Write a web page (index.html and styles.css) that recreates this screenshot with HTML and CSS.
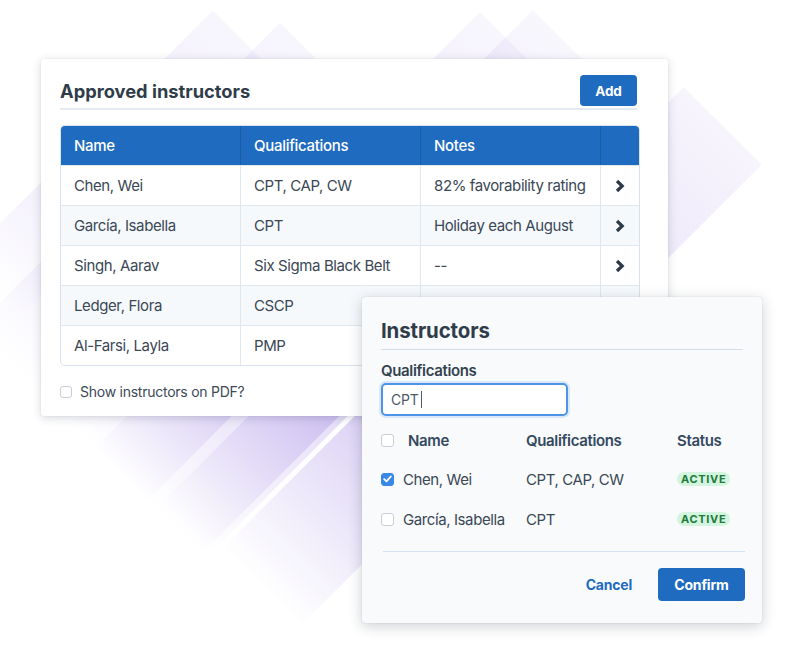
FILE: index.html
```html
<!DOCTYPE html>
<html lang="en">
<head>
<meta charset="utf-8">
<title>Approved instructors</title>
<link rel="stylesheet" href="styles.css">
</head>
<body>
<div class="page">
  <div class="bg" aria-hidden="true">
    <div class="bands">
      <div class="band b1"></div>
      <div class="band b2"></div>
      <div class="band b3"></div>
      <div class="band b4"></div>
      <div class="band b5"></div>
      <div class="band b6"></div>
    </div>
  </div>

  <section class="card">
    <header class="card-head">
      <h1 class="card-title">Approved instructors</h1>
      <button class="btn btn-primary btn-add">Add</button>
    </header>
    <div class="tbl">
      <div class="tr th">
        <div class="cell">Name</div>
        <div class="cell">Qualifications</div>
        <div class="cell">Notes</div>
        <div class="cell"></div>
      </div>
      <div class="tr">
        <div class="cell">Chen, Wei</div>
        <div class="cell">CPT, CAP, CW</div>
        <div class="cell">82% favorability rating</div>
        <div class="cell chev"><svg width="12" height="16" viewBox="0 0 12 16"><polyline points="3,3 8.2,8 3,13" fill="none" stroke="#2c3a48" stroke-width="3.2"/></svg></div>
      </div>
      <div class="tr alt">
        <div class="cell">García, Isabella</div>
        <div class="cell">CPT</div>
        <div class="cell">Holiday each August</div>
        <div class="cell chev"><svg width="12" height="16" viewBox="0 0 12 16"><polyline points="3,3 8.2,8 3,13" fill="none" stroke="#2c3a48" stroke-width="3.2"/></svg></div>
      </div>
      <div class="tr">
        <div class="cell">Singh, Aarav</div>
        <div class="cell">Six Sigma Black Belt</div>
        <div class="cell">--</div>
        <div class="cell chev"><svg width="12" height="16" viewBox="0 0 12 16"><polyline points="3,3 8.2,8 3,13" fill="none" stroke="#2c3a48" stroke-width="3.2"/></svg></div>
      </div>
      <div class="tr alt">
        <div class="cell">Ledger, Flora</div>
        <div class="cell">CSCP</div>
        <div class="cell"></div>
        <div class="cell"></div>
      </div>
      <div class="tr">
        <div class="cell">Al-Farsi, Layla</div>
        <div class="cell">PMP</div>
        <div class="cell"></div>
        <div class="cell"></div>
      </div>
    </div>
    <label class="pdf-row"><span class="cb"></span><span>Show instructors on PDF?</span></label>
  </section>

  <section class="modal">
    <h2 class="modal-title">Instructors</h2>
    <div class="field-label">Qualifications</div>
    <div class="input"><span>CPT</span><span class="caret"></span></div>
    <div class="mtbl">
      <div class="mrow mhead">
        <div class="mname"><span class="cb"></span><span class="hname">Name</span></div>
        <div>Qualifications</div>
        <div>Status</div>
      </div>
      <div class="mrow">
        <div class="mname"><span class="cb checked"><svg width="9" height="8" viewBox="0 0 9 8"><polyline points="1.2,4.2 3.5,6.3 7.8,1.5" fill="none" stroke="#fff" stroke-width="1.8" stroke-linecap="round" stroke-linejoin="round"/></svg></span><span>Chen, Wei</span></div>
        <div>CPT, CAP, CW</div>
        <div><span class="badge">ACTIVE</span></div>
      </div>
      <div class="mrow">
        <div class="mname"><span class="cb"></span><span>García, Isabella</span></div>
        <div>CPT</div>
        <div><span class="badge">ACTIVE</span></div>
      </div>
    </div>
    <footer class="modal-foot">
      <button class="btn btn-link">Cancel</button>
      <button class="btn btn-primary btn-confirm">Confirm</button>
    </footer>
  </section>
</div>
</body>
</html>
```

FILE: styles.css
```css
* { box-sizing: border-box; }
html, body { margin: 0; padding: 0; background: #fff; }
body {
  font-family: Inter, "Noto Sans", "Liberation Sans", sans-serif;
  color: #3a4755;
}
.page {
  position: relative;
  width: 800px;
  height: 649px;
  overflow: hidden;
  background: #fff;
}

/* decorative background */
.bg { position: absolute; inset: 0; overflow: hidden; z-index: 0; }
.bands { position: absolute; left: 0; top: 0; width: 0; height: 0; transform: rotate(-45deg); transform-origin: 0 0; }
.band { position: absolute; }
.b1 { left: -210px; top: 158px; width: 353px; height: 80px;
  background: linear-gradient(to right, rgba(150,120,225,0) 0%, rgba(150,120,225,.15) 40%, rgba(150,120,225,.07) 100%); }
.b2 { left: -250px; top: 214px; width: 432px; height: 100px;
  background: linear-gradient(to right, rgba(150,120,225,0) 0%, rgba(150,120,225,.17) 40%, rgba(150,120,225,.07) 100%); }
.b3 { left: -250px; top: 348px; width: 581px; height: 110px;
  background: linear-gradient(to right, rgba(150,120,225,0) 0%, rgba(150,120,225,.32) 35%, rgba(150,120,225,.06) 100%); }
.b4 { left: -250px; top: 384px; width: 620px; height: 150px;
  background: linear-gradient(to right, rgba(150,120,225,0) 0%, rgba(150,120,225,.32) 35%, rgba(150,120,225,.06) 100%); }
.b5 { left: -230px; top: 545px; width: 652px; height: 110px;
  background: linear-gradient(to right, rgba(150,120,225,0) 0%, rgba(150,120,225,.34) 30%, rgba(150,120,225,.08) 100%); }
.b6 { left: -240px; top: 470px; width: 420px; height: 70px;
  background: linear-gradient(to right, rgba(150,120,225,0) 0%, rgba(150,120,225,.25) 45%, rgba(150,120,225,.05) 100%); }

/* main card */
.card {
  position: relative;
  z-index: 1;
  width: 627px;
  height: 357px;
  margin: 59px 0 0 41px;
  background: #fff;
  border-radius: 2px;
  box-shadow: 0 2px 10px rgba(30, 40, 70, .18), 0 0 1px rgba(30,40,70,.2);
  padding: 16px 28px 0 19px;
}
.card-head {
  display: flex;
  align-items: center;
  justify-content: space-between;
  margin-right: 3px;
  padding-bottom: 2px;
  border-bottom: 2px solid #e3e9f0;
}
.card-title {
  margin: 0;
  font-size: 18.3px;
  font-weight: 700;
  color: #2f3d4a;
  line-height: 29px;
  padding-top: 2px;
}
.btn {
  font-family: Inter, "Noto Sans", "Liberation Sans", sans-serif;
  border: 0;
  background: none;
  padding: 0;
  cursor: pointer;
}
.btn-primary {
  background: #1f6bbf;
  color: #fff;
  font-weight: 700;
  border-radius: 4px;
}
.btn-add { width: 57px; height: 31px; font-size: 13.5px; letter-spacing: -0.1px; }

.tbl {
  margin-top: 15px;
  border: 1px solid #d9e3ed;
  border-radius: 5px;
  overflow: hidden;
}
.tr {
  display: grid;
  grid-template-columns: 179px 180px 180px 1fr;
  height: 40px;
  border-top: 1px solid #dfe7f0;
}
.tr.th { height: 39px; border-top: 0; background: #1f6bbf; color: #fff; font-weight: 500; }
.tr.alt { background: #f6f9fc; }
.cell {
  display: flex;
  align-items: center;
  padding: 0 13px;
  font-size: 15px;
  letter-spacing: -0.4px;
  white-space: nowrap;
  border-left: 1px solid #dfe7f0;
}
.th .cell { letter-spacing: -0.3px; }
.cell:first-child { border-left: 0; }
.th .cell { border-left-color: #1a5da6; }
.chev { justify-content: center; padding: 0; }
.chev svg { display: block; }

.pdf-row {
  display: flex;
  align-items: center;
  gap: 8px;
  margin-top: 17px;
  font-size: 14px;
  letter-spacing: -0.25px;
  color: #3d4a57;
}
.cb {
  display: inline-flex;
  align-items: center;
  justify-content: center;
  width: 13px;
  height: 13px;
  border: 1.5px solid #c9ced6;
  border-radius: 3px;
  background: #fff;
  flex: none;
}
.pdf-row .cb { width: 12px; height: 12px; }
.cb.checked { background: #3a88e6; border-color: #3a88e6; }
.cb svg { display: block; }

/* modal */
.modal {
  position: absolute;
  z-index: 2;
  left: 362px;
  top: 297px;
  width: 400px;
  height: 326px;
  background: #f8fafc;
  border-radius: 3px;
  box-shadow: 0 3px 14px rgba(25, 35, 60, .22), 0 0 1px rgba(25,35,60,.25);
  padding: 19px 19px 0 19px;
  color: #3a4755;
}
.modal-title {
  margin: 0;
  font-size: 20.4px;
  font-weight: 700;
  letter-spacing: -0.1px;
  color: #2f3d4a;
  line-height: 30px;
  padding-bottom: 3px;
  border-bottom: 1.5px solid #d4dfea;
}
.field-label {
  margin-top: 11px;
  font-size: 15px;
  font-weight: 600;
  letter-spacing: -0.35px;
  color: #34424f;
  line-height: 20px;
}
.input {
  display: flex;
  align-items: center;
  margin-top: 2px;
  width: 187px;
  height: 33px;
  border: 2px solid #4d94e8;
  border-radius: 5px;
  background: #fff;
  box-shadow: 0 0 0 2px rgba(77, 148, 232, .18);
  padding: 0 8px;
  font-size: 14px;
  letter-spacing: -0.2px;
  color: #4f5a66;
}
.caret { display: inline-block; width: 1px; height: 17px; background: #4f5a66; margin-left: 2px; }

.mtbl { margin-top: 15px; }
.mrow {
  display: grid;
  grid-template-columns: 145px 151px 1fr;
  align-items: center;
  height: 40px;
  font-size: 15px;
  letter-spacing: -0.4px;
  white-space: nowrap;
  color: #3a4755;
}
.mhead { height: 16px; font-weight: 600; letter-spacing: -0.35px; color: #34495e; margin-bottom: 12px; }
.mname { display: flex; align-items: center; gap: 9px; }
.mhead .mname { gap: 14px; }
.badge {
  display: inline-block;
  height: 14px;
  line-height: 14px;
  padding: 0 4px;
  border-radius: 7px;
  background: #d3f4de;
  color: #1d7a3b;
  font-size: 11px;
  font-weight: 700;
  letter-spacing: 0.7px;
  vertical-align: middle;
  position: relative;
  top: -1px;
}
.modal-foot {
  display: flex;
  align-items: center;
  justify-content: flex-end;
  gap: 26px;
  margin-top: 12px;
  margin-left: 2px;
  margin-right: -2px;
  border-top: 1.5px solid #d4e3f1;
  padding-top: 16px;
}
.btn-link { color: #1f6bbf; font-weight: 700; font-size: 14px; letter-spacing: -0.2px; }
.btn-confirm { width: 87px; height: 33px; font-size: 14px; letter-spacing: -0.2px; }
```
